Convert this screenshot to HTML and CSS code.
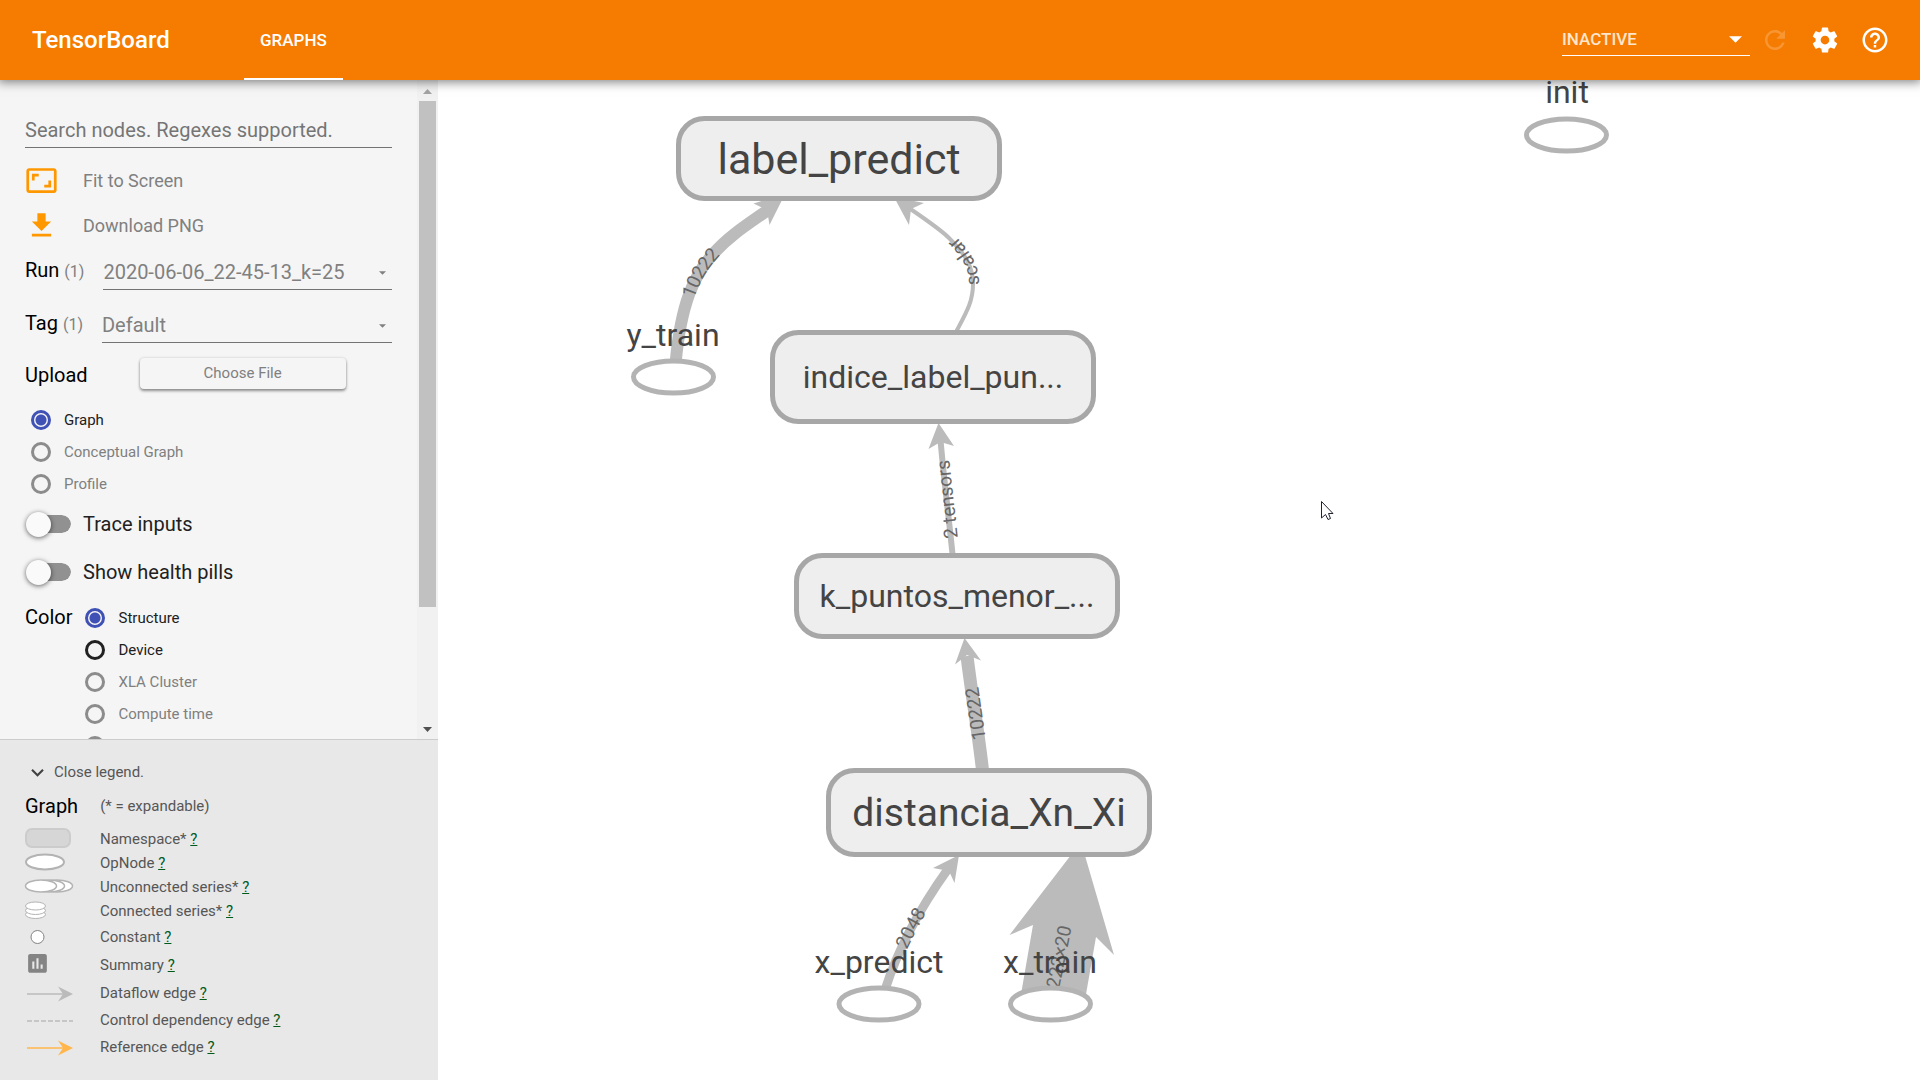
FILE: index.html
```html
<!DOCTYPE html>
<html lang="en">
<head>
<meta charset="utf-8">
<title>TensorBoard</title>
<link rel="stylesheet" href="styles.css">
</head>
<body>
<header class="toolbar">
  <h1 class="brand">TensorBoard</h1>
  <nav class="tabs"><a class="tab" href="#graphs">GRAPHS</a></nav>
  <div class="actions">
    <div class="select-wrap inactive">
      <select aria-label="Inactive dashboards"><option>INACTIVE</option></select>
      <svg class="caret" viewBox="0 0 10 5"><path d="M0 0h10L5 5z"/></svg>
    </div>
    <button class="icon-button" disabled aria-label="Reload"><svg viewBox="0 0 24 24"><path d="M17.65 6.35C16.2 4.9 14.21 4 12 4c-4.42 0-7.99 3.58-7.99 8s3.57 8 7.99 8c3.73 0 6.84-2.55 7.73-6h-2.08c-.82 2.33-3.04 4-5.65 4-3.31 0-6-2.69-6-6s2.69-6 6-6c1.66 0 3.14.69 4.22 1.78L13 11h7V4l-2.35 2.35z"/></svg></button>
    <button class="icon-button" aria-label="Settings"><svg viewBox="0 0 24 24"><path d="M19.43 12.98c.04-.32.07-.64.07-.98s-.03-.66-.07-.98l2.11-1.65c.19-.15.24-.42.12-.64l-2-3.46c-.12-.22-.39-.3-.61-.22l-2.49 1c-.52-.4-1.08-.73-1.69-.98l-.38-2.65C14.46 2.18 14.25 2 14 2h-4c-.25 0-.46.18-.49.42l-.38 2.65c-.61.25-1.17.59-1.69.98l-2.49-1c-.23-.09-.49 0-.61.22l-2 3.46c-.13.22-.07.49.12.64l2.11 1.65c-.04.32-.07.65-.07.98s.03.66.07.98l-2.11 1.65c-.19.15-.24.42-.12.64l2 3.46c.12.22.39.3.61.22l2.49-1c.52.4 1.08.73 1.69.98l.38 2.65c.03.24.24.42.49.42h4c.25 0 .46-.18.49-.42l.38-2.65c.61-.25 1.17-.59 1.69-.98l2.49 1c.23.09.49 0 .61-.22l2-3.46c.12-.22.07-.49-.12-.64l-2.11-1.65zM12 15.5c-1.93 0-3.5-1.57-3.5-3.5s1.57-3.5 3.5-3.5 3.5 1.57 3.5 3.5-1.57 3.5-3.5 3.5z"/></svg></button>
    <button class="icon-button" aria-label="Help"><svg viewBox="0 0 24 24"><path d="M11 18h2v-2h-2v2zm1-16C6.48 2 2 6.48 2 12s4.48 10 10 10 10-4.48 10-10S17.52 2 12 2zm0 18c-4.41 0-8-3.59-8-8s3.59-8 8-8 8 3.59 8 8-3.59 8-8 8zm0-14c-2.21 0-4 1.79-4 4h2c0-1.1.9-2 2-2s2 .9 2 2c0 2-3 1.75-3 5h2c0-2.25 3-2.5 3-5 0-2.21-1.79-4-4-4z"/></svg></button>
  </div>
</header>

<div class="workspace">
  <aside class="side">
    <div class="scroller">
      <form class="controls">
        <input class="search" type="text" aria-label="Search nodes" placeholder="Search nodes. Regexes supported.">
        <button type="button" class="action"><svg viewBox="0 0 24 24"><path d="M19 12h-2v3h-3v2h5v-5zM7 9h3V7H5v5h2V9zm14-6H3c-1.1 0-2 .9-2 2v14c0 1.1.9 2 2 2h18c1.1 0 2-.9 2-2V5c0-1.1-.9-2-2-2zm0 16.01H3V4.99h18v14.02z"/></svg><span>Fit to Screen</span></button>
        <button type="button" class="action"><svg viewBox="0 0 24 24"><path d="M19 9h-4V3H9v6H5l7 7 7-7zM5 18v2h14v-2H5z"/></svg><span>Download PNG</span></button>
        <div class="field">
          <label class="title" for="run">Run <span class="count">(1)</span></label>
          <div class="select-wrap"><select id="run"><option>2020-06-06_22-45-13_k=25</option></select><svg class="caret" viewBox="0 0 10 5"><path d="M0 0h10L5 5z"/></svg></div>
        </div>
        <div class="field">
          <label class="title" for="tag">Tag <span class="count">(1)</span></label>
          <div class="select-wrap"><select id="tag"><option>Default</option></select><svg class="caret" viewBox="0 0 10 5"><path d="M0 0h10L5 5z"/></svg></div>
        </div>
        <div class="upload"><span class="title">Upload</span><button type="button" class="choose">Choose File</button></div>
        <div class="radios kinds">
          <label class="radio"><input type="radio" name="kind" checked><span>Graph</span></label>
          <label class="radio off"><input type="radio" name="kind" disabled><span>Conceptual Graph</span></label>
          <label class="radio off"><input type="radio" name="kind" disabled><span>Profile</span></label>
        </div>
        <label class="toggle"><input type="checkbox"><span>Trace inputs</span></label>
        <label class="toggle"><input type="checkbox"><span>Show health pills</span></label>
        <div class="color">
          <span class="title">Color</span>
          <div class="radios">
            <label class="radio"><input type="radio" name="color" checked><span>Structure</span></label>
            <label class="radio"><input type="radio" name="color"><span>Device</span></label>
            <label class="radio off"><input type="radio" name="color" disabled><span>XLA Cluster</span></label>
            <label class="radio off"><input type="radio" name="color" disabled><span>Compute time</span></label>
            <label class="radio off"><input type="radio" name="color" disabled aria-label="Memory"></label>
          </div>
        </div>
      </form>
      <div class="scrollbar">
        <svg viewBox="0 0 9 5"><path class="dim" d="M0 5h9L4.500 0z"/></svg>
        <div class="track"><div class="thumb"></div></div>
        <svg viewBox="0 0 9 5"><path d="M0 0h9L4.500 5z"/></svg>
      </div>
    </div>
    <section class="legend">
      <button class="legend-toggle"><svg viewBox="0 0 24 24"><path d="M16.590 8.590L12 13.170 7.410 8.590 6 10l6 6 6-6z"/></svg><span>Close legend.</span></button>
      <div class="legend-head"><h2 class="title">Graph</h2><span>(* = expandable)</span></div>
      <ul class="keys">
        <li><svg viewBox="0 0 48 20"><rect x="1" y="0" width="44" height="18" rx="6" fill="#d6d6d6" stroke="#ccc" stroke-width="2"/></svg><span>Namespace* <a href="#namespace">?</a></span></li>
        <li><svg viewBox="0 0 48 20"><ellipse cx="20" cy="9" rx="19" ry="7.500" fill="#fff" stroke="#b3b3b3" stroke-width="2"/></svg><span>OpNode <a href="#opnode">?</a></span></li>
        <li><svg viewBox="0 0 48 20"><g fill="#fff" stroke="#b3b3b3" stroke-width="1.500"><ellipse cx="32" cy="9" rx="15.500" ry="6"/><ellipse cx="24" cy="9" rx="15.500" ry="6"/><ellipse cx="16" cy="9" rx="15.500" ry="6"/></g></svg><span>Unconnected series* <a href="#unconnected">?</a></span></li>
        <li><svg viewBox="0 0 48 20"><g fill="#fff" stroke="#b3b3b3"><ellipse cx="10.500" cy="13.500" rx="10" ry="4"/><ellipse cx="10.500" cy="9.500" rx="10" ry="4"/><ellipse cx="10.500" cy="5" rx="10" ry="4"/></g></svg><span>Connected series* <a href="#connected">?</a></span></li>
        <li class="tall"><svg viewBox="0 0 48 20"><circle cx="12.500" cy="10" r="6.500" fill="#fff" stroke="#848484"/></svg><span>Constant <a href="#constant">?</a></span></li>
        <li class="tallest"><svg viewBox="0 0 48 20"><path transform="translate(0 -4) scale(1.040)" fill="#848484" d="M19 3H5c-1.100 0-2 .9-2 2v14c0 1.100.9 2 2 2h14c1.100 0 2-.9 2-2V5c0-1.100-.9-2-2-2zM9 17H7v-7h2v7zm4 0h-2V7h2v10zm4 0h-2v-4h2v4z"/></svg><span>Summary <a href="#summary">?</a></span></li>
        <li class="tall"><svg viewBox="0 0 48 20"><path d="M2 11h36" stroke="#bbb" stroke-width="1.500"/><path d="M48 11L33 3.500 38 11 33 18.500z" fill="#bbb"/></svg><span>Dataflow edge <a href="#dataflow">?</a></span></li>
        <li class="tall"><svg viewBox="0 0 48 20"><path d="M2 11h46" stroke="#bbb" stroke-width="1.500" stroke-dasharray="5 2"/></svg><span>Control dependency edge <a href="#control">?</a></span></li>
        <li class="tall"><svg viewBox="0 0 48 20"><path d="M2 11h36" stroke="#ffb74d" stroke-width="1.500"/><path d="M48 11L33 3.500 38 11 33 18.500z" fill="#ffb74d"/></svg><span>Reference edge <a href="#reference">?</a></span></li>
      </ul>
    </section>
  </aside>

  <main class="stage">
    <svg class="graph">
      <g transform="translate(-438 -80)">
        <g class="edges">
          <path id="e-ytrain" stroke-width="12" d="M675.700 362C681 304 694 274 714 253C728 237 745 226 768 210"/>
          <path id="e-scalar" stroke-width="4" d="M956 332C966 313 973 302 973 284C973 266 965 254 949 238C940 229 925 219 909 208"/>
          <path id="e-tensors" stroke-width="6" d="M952.500 554C948 510 944 480 940.500 440"/>
          <path id="e-dist" stroke-width="13" d="M982.500 770C978 730 971 690 967 656"/>
          <path id="e-xpredict" stroke-width="9" d="M885 990C897 952 915 915 948 869"/>
        </g>
        <g class="heads">
          <path d="M785 194L769.500 225 767 210 753.500 203.500z"/>
          <path d="M894 197L924 203 911 209 909 225z"/>
          <path d="M938.500 423L954 446 940.500 442 928.500 449z"/>
          <path d="M964.500 638L981 660.500 967 655 955 664.500z"/>
          <path d="M959 855L954.500 883 949 871 933 868z"/>
          <path d="M1081 842L1114 955 1096 937 1085 1000 1020 1000 1033 925 1009.500 935z"/>
        </g>
        <path id="l-xtrain" fill="none" d="M1049 1009L1070 905"/>
        <g class="edge-labels">
          <text dy="6"><textPath href="#e-ytrain" startOffset="50%">10222</textPath></text>
          <text dy="6"><textPath href="#e-scalar" startOffset="49%">scalar</textPath></text>
          <text dy="7"><textPath href="#e-tensors" startOffset="48%">2 tensors</textPath></text>
          <text dy="7"><textPath href="#e-dist" startOffset="49%">10222</textPath></text>
          <text dy="6"><textPath href="#e-xpredict" startOffset="49%">2048</textPath></text>
          <text dy="6"><textPath href="#l-xtrain" startOffset="40%">10222×20</textPath></text>
        </g>
        <g class="groups">
          <rect x="678.500" y="118.500" width="321" height="80" rx="26"/>
          <rect x="772.500" y="332.500" width="321" height="89" rx="26"/>
          <rect x="796.500" y="555.500" width="321" height="81" rx="26"/>
          <rect x="828.500" y="770.500" width="321" height="84" rx="26"/>
        </g>
        <g class="ops">
          <ellipse cx="673.500" cy="377" rx="40" ry="16"/>
          <ellipse cx="1566.500" cy="135" rx="40" ry="16"/>
          <ellipse cx="879" cy="1004" rx="40" ry="16"/>
          <ellipse cx="1050.500" cy="1004" rx="40" ry="16"/>
        </g>
        <g class="names">
          <text class="xl" x="839" y="174">label_predict</text>
          <text class="md" x="933" y="388">indice_label_pun...</text>
          <text class="md" x="957" y="607">k_puntos_menor_...</text>
          <text class="lg" x="989" y="826">distancia_Xn_Xi</text>
          <text class="md" x="673" y="346">y_train</text>
          <text class="md" x="1567" y="103">init</text>
          <text class="md" x="879" y="973">x_predict</text>
          <text class="md" x="1050" y="973">x_train</text>
        </g>
        <path class="pointer" d="M1321.500 501.500V518L1325.500 514.500 1328 519.500 1330.500 518.500 1328.500 513.500H1333z"/>
      </g>
    </svg>
  </main>
</div>
</body>
</html>
```

FILE: styles.css
```css
* { box-sizing: border-box; }

body {
  margin: 0;
  height: 100vh;
  display: flex;
  flex-direction: column;
  overflow: hidden;
  font-family: Roboto, sans-serif;
  font-size: 15px;
  color: #000;
}

button, input, select { font: inherit; margin: 0; }
h1, h2, ul { margin: 0; padding: 0; font-weight: 400; }
ul { list-style: none; }
svg { display: block; flex: none; }

/* Toolbar */
.toolbar {
  position: relative;
  z-index: 1;
  flex: none;
  height: 80px;
  display: flex;
  align-items: center;
  padding: 0 20px 0 32px;
  background: #f57c00;
  color: #fff;
  box-shadow: 0 0 10px 2px rgba(0, 0, 0, .5);
}
.brand { width: 212px; font-size: 24px; font-weight: 500; }
.tabs { align-self: stretch; display: flex; }
.tab {
  display: flex;
  align-items: center;
  padding: 2px 16px 0;
  border-bottom: 2px solid #fff;
  color: #fff;
  font-size: 17px;
  font-weight: 500;
  text-decoration: none;
}
.actions { margin-left: auto; display: flex; align-items: center; }
.icon-button {
  width: 50px;
  height: 50px;
  padding: 10px;
  border: 0;
  background: none;
  fill: #fff;
}
.icon-button:disabled { fill: rgba(255, 255, 255, .2); }
.icon-button svg { width: 30px; height: 30px; }

/* Drop-downs */
.select-wrap {
  position: relative;
  flex: 1;
  border-bottom: 1px solid #737373;
}
.select-wrap select {
  display: block;
  width: 100%;
  height: 36px;
  padding: 2px 0 0;
  border: 0;
  appearance: none;
  background: none;
  color: #808080;
  font-size: 20px;
}
.caret {
  position: absolute;
  right: 6px;
  top: 18px;
  width: 7px;
  height: 4px;
  fill: #808080;
}
.inactive { flex: none; width: 188px; margin-bottom: 2px; border-color: #fff; }
.inactive select { height: 32px; padding: 0; color: #fee5cc; font-size: 17px; font-weight: 500; }
.inactive .caret { right: 8px; top: 13px; width: 13px; height: 7px; fill: #fff; }

/* Side panel */
.workspace { flex: 1; min-height: 0; display: flex; }
.side { flex: none; width: 438px; display: flex; flex-direction: column; background: #f5f5f5; }
.scroller { flex: 1; min-height: 0; display: flex; overflow: hidden; }
.controls { flex: 1; padding: 32px 25px 0; }
.title { font-size: 20px; color: #000; }
.count { font-size: 16px; color: #808080; }

.search {
  display: block;
  width: 100%;
  height: 36px;
  padding: 0;
  border: 0;
  border-bottom: 1px solid #737373;
  background: none;
  font-size: 20px;
}
.search::placeholder { color: #757575; opacity: 1; }

.action {
  display: flex;
  align-items: center;
  gap: 25px;
  width: 100%;
  height: 45px;
  padding: 0;
  border: 0;
  background: none;
  color: #808080;
  font-size: 18px;
}
.search + .action { margin-top: 10px; }
.action svg { width: 33px; height: 33px; fill: #ff9800; }

.field { display: flex; align-items: flex-start; gap: 19px; height: 53px; padding-top: 5px; }
.field .title { line-height: 34px; }

.upload { display: flex; align-items: center; gap: 52px; height: 42px; }
.choose {
  width: 206px;
  height: 31px;
  margin-bottom: 4px;
  padding: 0;
  border: 0;
  border-radius: 4px;
  background: #f5f5f5;
  color: #808080;
  box-shadow: 0 2px 3px rgba(0, 0, 0, .4), 0 0 3px rgba(0, 0, 0, .15);
}

.radio { display: flex; align-items: center; gap: 13px; height: 32px; color: #212121; }
.radio.off { color: #808080; }
.radio input {
  appearance: none;
  width: 20px;
  height: 20px;
  border: 3px solid #212121;
  border-radius: 50%;
}
.radio input:disabled { border-color: #8c8c8c; }
.radio input:checked {
  border-color: #3f51b5;
  background: radial-gradient(circle, #3f51b5 5px, transparent 6px);
}
.kinds { padding: 8px 6px 0; }

.toggle { display: flex; align-items: center; gap: 12px; height: 48px; font-size: 20px; color: #212121; }
.toggle input {
  appearance: none;
  position: relative;
  width: 46px;
  height: 18px;
  border-left: 10px solid transparent;
  border-radius: 9px;
  background: #919191 padding-box;
}
.toggle input::before {
  content: "";
  position: absolute;
  left: -9px;
  top: -3px;
  width: 25px;
  height: 25px;
  border-radius: 50%;
  background: #fafafa;
  box-shadow: 0 1px 5px rgba(0, 0, 0, .6);
}
.color { display: flex; gap: 13px; padding-top: 6px; }
.color .title { line-height: 30px; }

.scrollbar { width: 21px; display: flex; flex-direction: column; align-items: center; background: #f1f1f1; }
.scrollbar svg { width: 9px; height: 5px; margin: 9px 0 7px; fill: #505050; }
.scrollbar svg .dim { fill: #a3a3a3; }
.track { flex: 1; }
.thumb { width: 17px; height: 82%; background: #c1c1c1; }

/* Legend */
.legend {
  flex: none;
  padding: 19px 25px 20px;
  border-top: 1px solid #ccc;
  background: #e8e8e8;
  color: #565656;
}
.legend-toggle {
  display: flex;
  align-items: center;
  gap: 4px;
  height: 26px;
  padding: 0;
  border: 0;
  background: none;
  color: inherit;
}
.legend-toggle svg { width: 25px; height: 25px; fill: #424242; }
.legend-head { display: flex; align-items: center; gap: 22px; height: 42px; }
.keys li { display: flex; align-items: center; gap: 27px; height: 24px; }
.keys li.tall { height: 27px; }
.keys li.tallest { height: 29px; }
.keys svg { width: 48px; height: 20px; overflow: visible; }
.keys a { color: #005a1c; }

/* Graph */
.stage { flex: 1; min-width: 0; background: #fff; }
.graph { width: 100%; height: 100%; }
.edges path { fill: none; stroke: #bbb; }
.heads path { fill: #bbb; }
.edge-labels text { font-size: 19px; fill: #666; text-anchor: middle; }
.groups rect { fill: #eee; stroke: #a7a7a7; stroke-width: 5px; }
.ops ellipse { fill: #fff; stroke: #b3b3b3; stroke-width: 5px; }
.names text { fill: #444; text-anchor: middle; }
.names .xl { font-size: 43px; }
.names .lg { font-size: 39px; }
.names .md { font-size: 32px; }
.pointer { fill: #fff; stroke: #223; }
```
